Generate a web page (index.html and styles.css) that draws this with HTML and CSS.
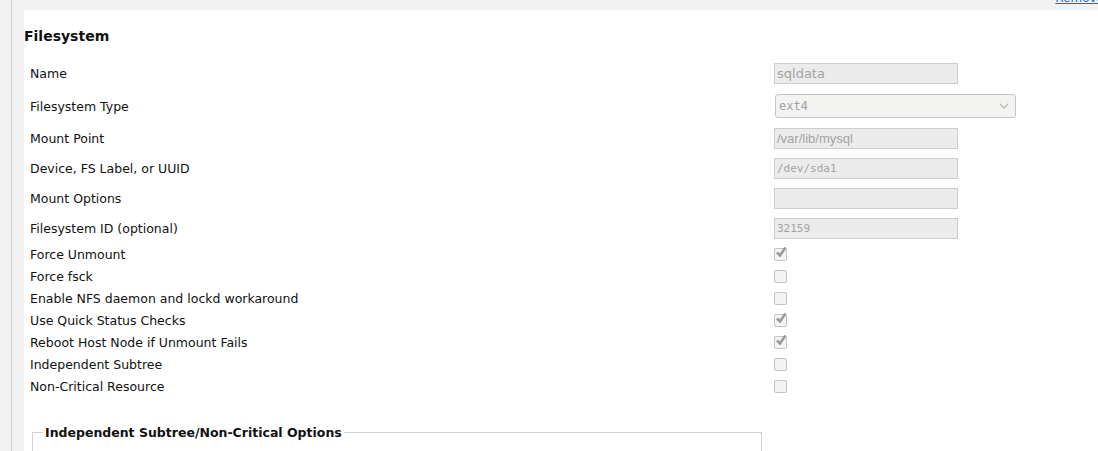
FILE: index.html
```html
<!DOCTYPE html>
<html lang="en">
<head>
  <meta charset="UTF-8">
  <title>Filesystem Resource</title>
  <link rel="stylesheet" href="styles.css">
</head>
<body>
  <div class="frame">
    <div class="topbar">
      <a class="remove" href="#">Remove</a>
    </div>
    <div class="panel">
      <h2>Filesystem</h2>

      <div class="row tall">
        <span class="label">Name</span>
        <span class="field sans">sqldata</span>
      </div>
      <div class="row type">
        <span class="label">Filesystem Type</span>
        <span class="select mono">ext4
          <svg class="chev" width="10" height="6" viewBox="0 0 10 6"><path d="M1 1l4 4 4-4" fill="none" stroke="#bbb" stroke-width="1.4"/></svg>
        </span>
      </div>
      <div class="row tall">
        <span class="label">Mount Point</span>
        <span class="field narrow">/var/lib/mysql</span>
      </div>
      <div class="row tall">
        <span class="label">Device, FS Label, or UUID</span>
        <span class="field mono">/dev/sda1</span>
      </div>
      <div class="row tall">
        <span class="label">Mount Options</span>
        <span class="field"></span>
      </div>
      <div class="row tall">
        <span class="label">Filesystem ID (optional)</span>
        <span class="field mono">32159</span>
      </div>

      <div class="row check-row">
        <span class="label">Force Unmount</span>
        <span class="box"><svg width="14" height="14" viewBox="0 0 14 14"><path d="M3 6.5l3 3 5.5-8" fill="none" stroke="#9a9a9a" stroke-width="2.6"/></svg></span>
      </div>
      <div class="row check-row">
        <span class="label">Force fsck</span>
        <span class="box"></span>
      </div>
      <div class="row check-row">
        <span class="label">Enable NFS daemon and lockd workaround</span>
        <span class="box"></span>
      </div>
      <div class="row check-row">
        <span class="label">Use Quick Status Checks</span>
        <span class="box"><svg width="14" height="14" viewBox="0 0 14 14"><path d="M3 6.5l3 3 5.5-8" fill="none" stroke="#9a9a9a" stroke-width="2.6"/></svg></span>
      </div>
      <div class="row check-row">
        <span class="label">Reboot Host Node if Unmount Fails</span>
        <span class="box"><svg width="14" height="14" viewBox="0 0 14 14"><path d="M3 6.5l3 3 5.5-8" fill="none" stroke="#9a9a9a" stroke-width="2.6"/></svg></span>
      </div>
      <div class="row check-row">
        <span class="label">Independent Subtree</span>
        <span class="box"></span>
      </div>
      <div class="row check-row">
        <span class="label">Non-Critical Resource</span>
        <span class="box"></span>
      </div>

      <fieldset class="options">
        <legend>Independent Subtree/Non-Critical Options</legend>
        <div class="spacer"></div>
      </fieldset>
    </div>
  </div>
</body>
</html>
```
FILE: styles.css
```css
html, body {
  margin: 0;
  height: 100%;
  overflow: hidden;
}
body {
  background: #f2f2f2;
  font-family: "DejaVu Sans", sans-serif;
  font-size: 12.5px;
  color: #111;
}
.frame {
  margin-left: 11px;
  border-left: 1px solid #cfcfcf;
  padding-left: 12px;
  height: 100%;
}
.topbar {
  height: 10px;
  display: flex;
  justify-content: flex-end;
}
.remove {
  color: #1a6fc9;
  font-size: 12px;
  line-height: 14px;
  margin-top: -9px;
  margin-right: -6px;
}
.panel {
  background: #fff;
  height: 100%;
  padding-top: 17px;
}
h2 {
  margin: 0 0 13px 0;
  font-size: 14px;
  line-height: 18px;
  font-weight: bold;
}
.row {
  display: flex;
  align-items: center;
  padding-left: 6px;
}
.row.tall {
  height: 30px;
}
.row:first-of-type {
  height: 31px;
}
.row.type {
  height: 34px;
}
.row.check-row {
  height: 22px;
}
.label {
  width: 744px;
  flex: none;
}
.field {
  box-sizing: border-box;
  width: 184px;
  height: 21px;
  background: #ececec;
  border: 1px solid #cdcdcd;
  color: #a3a3a3;
  padding: 0 4px 0 2px;
  line-height: 19px;
  overflow: hidden;
}
.sans {
  font-family: "DejaVu Sans", sans-serif;
  font-size: 13px;
}
.narrow {
  font-family: "Liberation Sans", sans-serif;
  font-size: 13px;
}
.mono {
  font-family: "DejaVu Sans Mono", monospace;
  font-size: 11px;
}
.select {
  box-sizing: border-box;
  margin-left: 1px;
  width: 241px;
  height: 24px;
  background: #f3f3f2;
  border: 1px solid #c4c4c4;
  border-radius: 3px;
  color: #a3a3a3;
  font-size: 12px;
  padding: 0 6px 0 3px;
  display: flex;
  align-items: center;
  justify-content: space-between;
}
.chev {
  display: block;
}
.box {
  box-sizing: border-box;
  width: 13px;
  height: 13px;
  border: 1px solid #c3c3c3;
  border-radius: 2px;
  background: #f4f4f4;
  position: relative;
}
.box svg {
  position: absolute;
  left: -1px;
  top: -3px;
}
.options {
  margin: 28px 0 0 8px;
  width: 730px;
  box-sizing: border-box;
  border: 1px solid #cfd3d6;
  padding: 0 10px;
}
.options legend {
  font-size: 12.5px;
  font-weight: bold;
  padding: 0 2px;
}
.spacer {
  height: 40px;
}
```
